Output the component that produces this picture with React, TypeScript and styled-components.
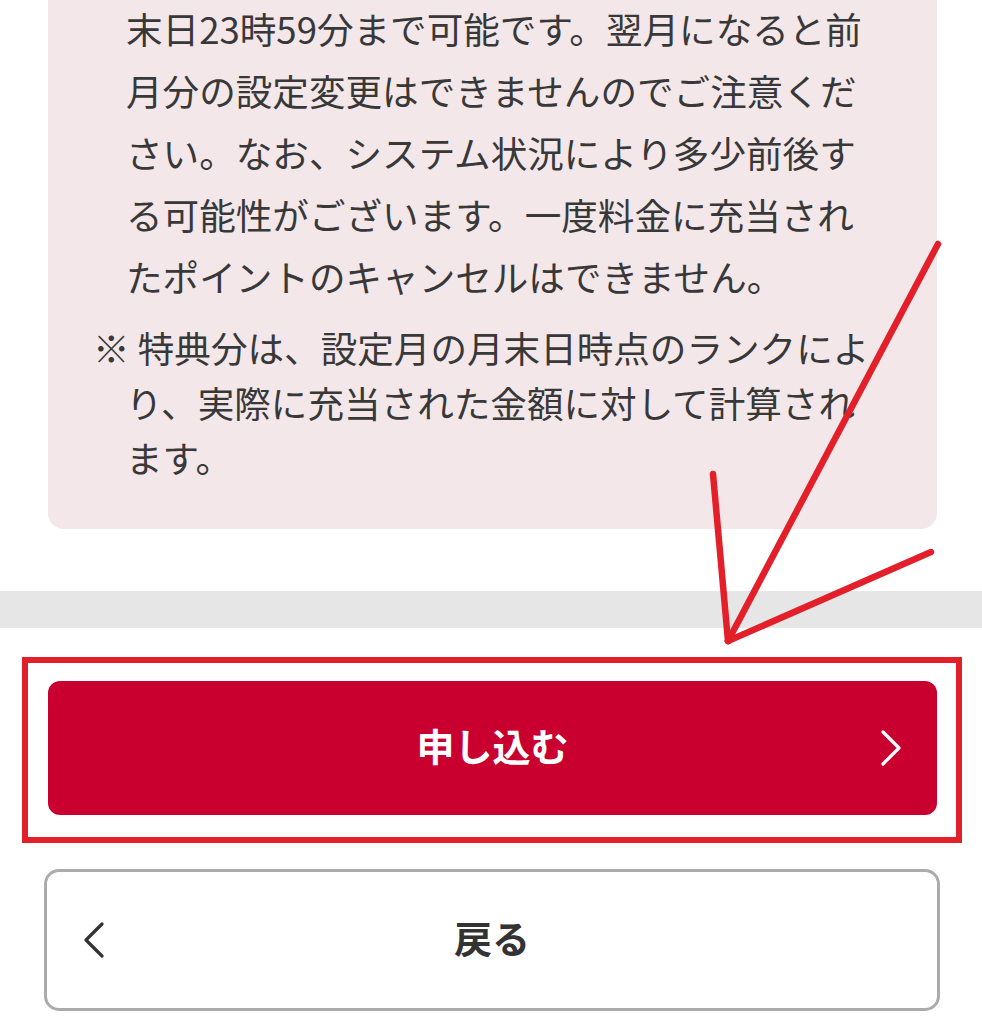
import styled, { createGlobalStyle } from 'styled-components';

const GlobalStyle = createGlobalStyle`
  html, body {
    margin: 0;
    padding: 0;
    background: #ffffff;
  }

  body {
    font-family: "Noto Sans CJK JP", "Noto Sans", sans-serif;
    color: #383838;
  }
`;

const Page = styled.div`
  position: relative;
  width: 982px;
  height: 1024px;
  overflow: hidden;
  background: #ffffff;
`;

const Notice = styled.div`
  margin: -2px 45px 0 48px;
  padding: 0 0 44px 78px;
  background: #f3e7e9;
  border-radius: 0 0 16px 16px;
`;

interface NoteProps {
  lineHeight: number;
  hanging?: boolean;
}

const Note = styled.p<NoteProps>`
  margin: 0;
  font-size: 36.6px;
  line-height: ${({ lineHeight }) => lineHeight}px;
  white-space: nowrap;
  text-indent: ${({ hanging }) => (hanging ? '-33px' : '0')};

  & + & {
    margin-top: 12px;
  }
`;

const Divider = styled.div`
  height: 37px;
  margin-top: 62px;
  background: #e6e6e6;
`;

const Actions = styled.div`
  display: flex;
  flex-direction: column;
  gap: 54px;
  padding: 53px 42px 0 44px;
`;

interface ActionButtonProps {
  primary?: boolean;
}

const ActionButton = styled.button<ActionButtonProps>`
  display: grid;
  grid-template-columns: 1fr auto 1fr;
  align-items: center;
  width: 100%;
  margin: 0;
  font-family: "Noto Sans CJK JP", "Noto Sans", sans-serif;
  font-weight: 700;
  font-size: 38px;
  cursor: pointer;

  ${({ primary }) => primary ? `
    width: calc(100% - 7px);
    margin-left: 4px;
    height: 134px;
    padding: 0 35px;
    background: #c9002f;
    color: #ffffff;
    border: none;
    border-radius: 12px;
  ` : `
    height: 142px;
    padding: 0 36px;
    background: #ffffff;
    color: #333333;
    border: 3.5px solid #ababab;
    border-radius: 15px;
  `}
`;

const Label = styled.span`
  grid-column: 2;
  grid-row: 1;
  line-height: 1;
  padding-bottom: 6px;
`;

interface ChevronSlotProps {
  side: 'left' | 'right';
}

const ChevronSlot = styled.span<ChevronSlotProps>`
  display: flex;
  grid-column: ${({ side }) => (side === 'left' ? 1 : 3)};
  grid-row: 1;
  justify-content: ${({ side }) => (side === 'left' ? 'flex-start' : 'flex-end')};
`;

const Overlay = styled.svg`
  position: absolute;
  top: 0;
  left: 0;
  pointer-events: none;
`;

const Chevron = ({ dir, color }: { dir: 'left' | 'right'; color: string }) => (
  <svg width="22" height="36" viewBox="0 0 22 36">
    <path
      d={dir === 'right' ? 'M3 2 L19 18 L3 34' : 'M19 2 L3 18 L19 34'}
      fill="none"
      stroke={color}
      strokeWidth="3.2"
      strokeLinecap="round"
      strokeLinejoin="round"
    />
  </svg>
);

export default function App() {
  return (
    <>
      <GlobalStyle />
      <Page>
        <Notice>
          <Note lineHeight={62}>
            末日23時59分まで可能です。翌月になると前<br />
            月分の設定変更はできませんのでご注意くだ<br />
            さい。なお、システム状況により多少前後す<br />
            る可能性がございます。一度料金に充当され<br />
            たポイントのキャンセルはできません。
          </Note>
          <Note lineHeight={55} hanging>
            ※ 特典分は、設定月の月末日時点のランクによ<br />
            り、実際に充当された金額に対して計算され<br />
            ます。
          </Note>
        </Notice>

        <Divider />

        <Actions>
          <ActionButton primary>
            <Label>申し込む</Label>
            <ChevronSlot side="right">
              <Chevron dir="right" color="#ffffff" />
            </ChevronSlot>
          </ActionButton>
          <ActionButton>
            <ChevronSlot side="left">
              <Chevron dir="left" color="#333333" />
            </ChevronSlot>
            <Label>戻る</Label>
          </ActionButton>
        </Actions>

        <Overlay width="982" height="1024" viewBox="0 0 982 1024">
          <rect x="25" y="660" width="934" height="180" fill="none" stroke="#e3202a" strokeWidth="6" />
          <g stroke="#e3202a" strokeWidth="6.5" strokeLinecap="round" fill="none">
            <line x1="938" y1="244" x2="728" y2="641" />
            <line x1="713" y1="474" x2="728" y2="641" />
            <line x1="931" y1="552" x2="728" y2="641" />
          </g>
        </Overlay>
      </Page>
    </>
  );
}
